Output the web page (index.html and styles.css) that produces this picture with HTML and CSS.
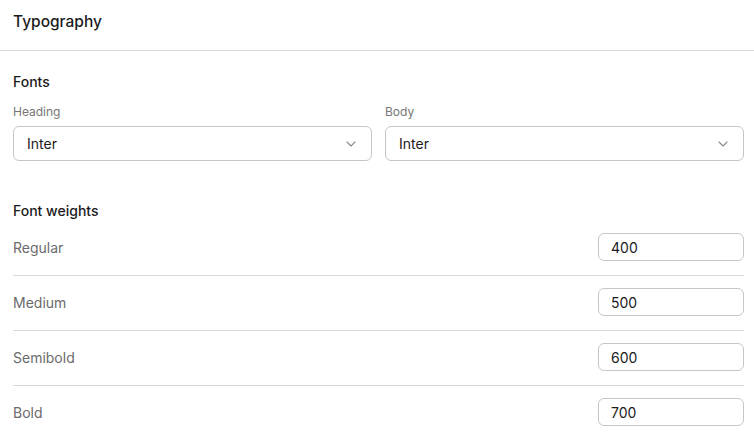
FILE: index.html
```html
<!DOCTYPE html>
<html lang="en">
<head>
    <meta charset="UTF-8">
    <meta name="viewport" content="width=device-width, initial-scale=1.0">
    <title>Typography</title>
    <link rel="stylesheet" href="styles.css">
</head>
<body>
    <div class="panel-header">
        <h1>Typography</h1>
    </div>

    <div class="section">
        <h2>Fonts</h2>
        <div class="font-grid">
            <div class="field">
                <label>Heading</label>
                <div class="select">
                    <span>Inter</span>
                    <svg class="chevron" width="10" height="6" viewBox="0 0 10 6"><path d="M1 1l4 4 4-4" fill="none" stroke="#8a8a8a" stroke-width="1.1" stroke-linecap="round" stroke-linejoin="round"/></svg>
                </div>
            </div>
            <div class="field">
                <label>Body</label>
                <div class="select">
                    <span>Inter</span>
                    <svg class="chevron" width="10" height="6" viewBox="0 0 10 6"><path d="M1 1l4 4 4-4" fill="none" stroke="#8a8a8a" stroke-width="1.1" stroke-linecap="round" stroke-linejoin="round"/></svg>
                </div>
            </div>
        </div>
    </div>

    <div class="section weights">
        <h2>Font weights</h2>
        <div class="weight-row">
            <span class="weight-name">Regular</span>
            <input class="weight-input" type="text" value="400">
        </div>
        <div class="weight-row">
            <span class="weight-name">Medium</span>
            <input class="weight-input" type="text" value="500">
        </div>
        <div class="weight-row">
            <span class="weight-name">Semibold</span>
            <input class="weight-input" type="text" value="600">
        </div>
        <div class="weight-row">
            <span class="weight-name">Bold</span>
            <input class="weight-input" type="text" value="700">
        </div>
    </div>
</body>
</html>
```

FILE: styles.css
```css
* {
    margin: 0;
    padding: 0;
    box-sizing: border-box;
    font-family: Inter, 'Noto Sans', sans-serif;
}

body {
    background: white;
    color: #1b1b1b;
}

.panel-header {
    height: 51px;
    padding: 12px 13px 0;
    border-bottom: 1px solid #dcd9d4;
}

h1 {
    font-size: 15.5px;
    font-weight: 500;
    line-height: 20px;
}

.section {
    padding: 0 10px 0 13px;
}

h2 {
    font-size: 14px;
    font-weight: 500;
    line-height: 20px;
    padding-top: 21px;
}

.font-grid {
    display: grid;
    grid-template-columns: 1fr 1fr;
    gap: 13px;
    margin-top: 12px;
}

label {
    display: block;
    font-size: 12px;
    color: #767676;
    line-height: 16px;
    margin-bottom: 6px;
}

.select {
    height: 35px;
    border: 1px solid #c9c6c1;
    border-radius: 6px;
    display: flex;
    align-items: center;
    justify-content: space-between;
    padding: 0 15px 0 13px;
    font-size: 14px;
}

.weights h2 {
    padding-top: 40px;
}

.weight-row {
    display: flex;
    align-items: center;
    justify-content: space-between;
    padding: 12px 0 14px;
    border-bottom: 1px solid #dcd9d4;
}

.weight-row:last-child {
    border-bottom: none;
}

.weight-name {
    font-size: 14px;
    color: #6b6b6b;
}

.weight-input {
    width: 146px;
    height: 28px;
    border: 1px solid #c9c6c1;
    border-radius: 6px;
    padding: 0 12px;
    font-size: 14px;
    color: #1b1b1b;
    outline: none;
}
```
